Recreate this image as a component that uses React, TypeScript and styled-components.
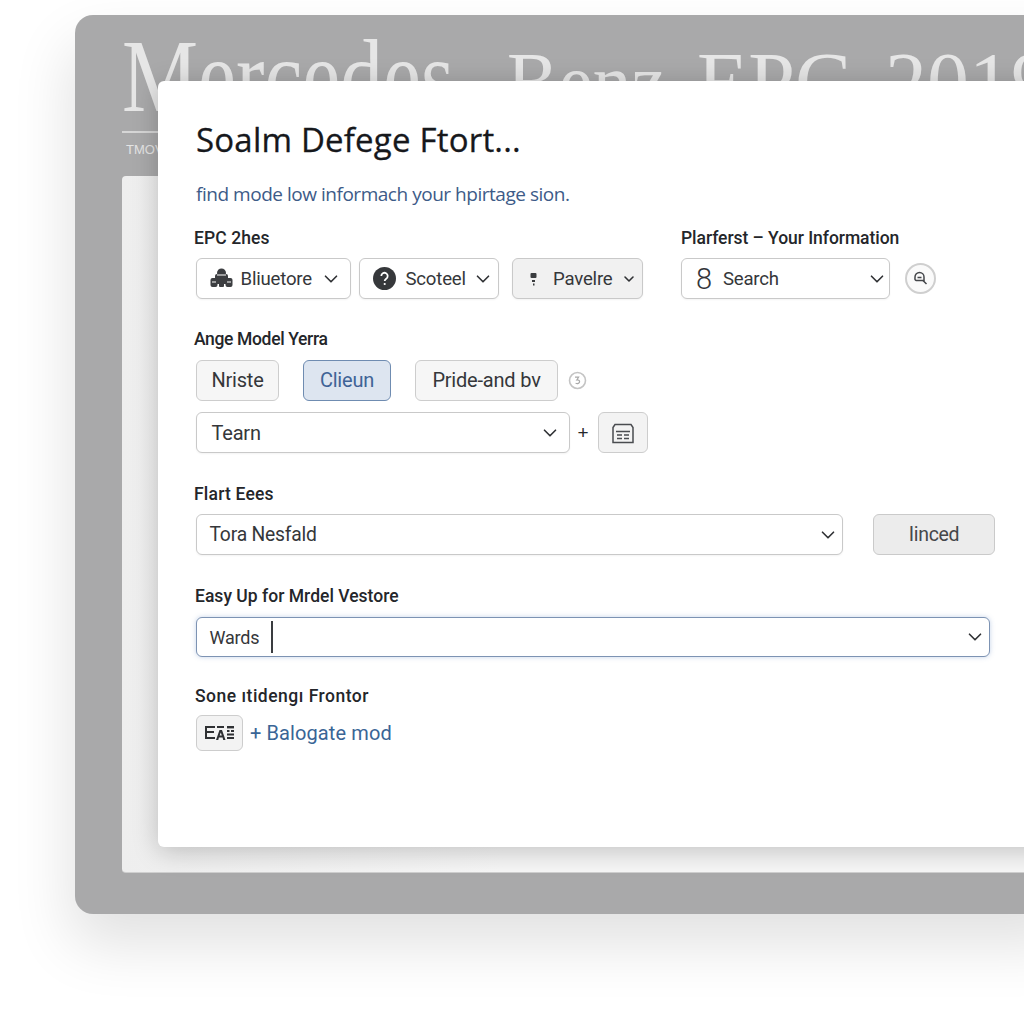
import React from "react";
import styled, { createGlobalStyle } from "styled-components";
import { ChevronDown } from "lucide-react";

const GlobalStyle = createGlobalStyle`
  html, body {
    margin: 0;
    padding: 0;
    width: 1024px;
    height: 1024px;
    overflow: hidden;
    background: #ffffff;
  }
  * {
    box-sizing: border-box;
  }
`;

const Stage = styled.div`
  width: 1024px;
  height: 1024px;
  padding: 15px 0 0 75px;
  overflow: hidden;
  position: relative;
  background: #ffffff;
`;

const BackWindow = styled.div`
  width: 1000px;
  height: 899px;
  padding: 16px 0 0 47px;
  background: #a9a9aa;
  border-radius: 18px 0 0 18px;
  box-shadow: -4px 30px 60px rgba(0, 0, 0, 0.12);
  overflow: hidden;
`;

const BackTitle = styled.div`
  display: flex;
  align-items: baseline;
  height: 90px;
  font-family: "Liberation Serif", serif;
  color: #e6e6e6;
  white-space: nowrap;
`;

const BackWord = styled.span<{ $width: number; $size: number; $squeeze: number }>`
  display: block;
  flex: none;
  width: ${(p) => p.$width}px;
  font-size: ${(p) => p.$size}px;
  line-height: 90px;
  transform: scaleX(${(p) => p.$squeeze});
  transform-origin: left center;
`;

const BackRule = styled.div`
  height: 2px;
  margin-top: 10px;
  background: #d6d6d6;
`;

const BackCaption = styled.div`
  font-family: "Liberation Sans", sans-serif;
  font-size: 13px;
  line-height: 16px;
  margin-top: 9px;
  padding-left: 4px;
  color: #e4e4e4;
`;

const BackPanel = styled.div`
  height: 697px;
  margin-top: 18px;
  background: linear-gradient(90deg, #eeeeee 0%, #f6f6f6 40%);
  border-bottom: 1px solid #cfcfcf;
  border-radius: 4px 0 0 4px;
`;

const Modal = styled.div`
  position: absolute;
  left: 158px;
  top: 81px;
  width: 900px;
  height: 766px;
  padding: 37px 0 0 38px;
  background: #ffffff;
  border-radius: 6px;
  box-shadow: 0 4px 26px rgba(0, 0, 0, 0.22);
  font-family: Roboto, sans-serif;
  color: #2b2d30;
`;

const Title = styled.h1`
  margin: 0;
  font-family: "Open Sans", sans-serif;
  font-size: 33px;
  line-height: 44px;
  font-weight: 500;
  color: #16181c;
  letter-spacing: 0.2px;
  -webkit-text-stroke: 0.3px #16181c;
`;

const Subtitle = styled.p`
  margin: 19px 0 0;
  font-family: "Open Sans", sans-serif;
  font-size: 19px;
  line-height: 26px;
  letter-spacing: -0.47px;
  color: #3d5b88;
`;

const TopColumns = styled.div`
  display: flex;
  margin-top: 19px;
`;

const LeftColumn = styled.div`
  width: 485px;
  flex: none;
`;

const Label = styled.div<{ $gap?: number; $spacing?: number; $left?: number }>`
  margin-left: ${(p) => p.$left ?? -2}px;
  margin-top: ${(p) => p.$gap ?? 0}px;
  font-size: 17.5px;
  line-height: 24px;
  font-weight: 500;
  letter-spacing: ${(p) => p.$spacing ?? -0.35}px;
  color: #24262a;
  white-space: nowrap;
`;

const Row = styled.div<{ $top?: number; $gap?: number }>`
  display: flex;
  align-items: center;
  margin-top: ${(p) => p.$top ?? 8}px;
  gap: ${(p) => p.$gap ?? 8}px;
`;

const SelectBox = styled.div<{
  $width: number;
  $muted?: boolean;
  $focus?: boolean;
  $pad?: number;
  $right?: number;
  $size?: number;
  $lead?: number;
}>`
  width: ${(p) => p.$width}px;
  height: ${(p) => (p.$focus ? 40 : 41)}px;
  margin-left: ${(p) => p.$lead ?? 0}px;
  flex: none;
  display: flex;
  align-items: center;
  padding: 0 ${(p) => p.$right ?? 8.5}px 0 ${(p) => p.$pad ?? 12.5}px;
  background: ${(p) => (p.$muted ? "#f1f1f1" : "#ffffff")};
  border: ${(p) => (p.$focus ? "1.5px solid #7d93b3" : "1.5px solid #c9c9c9")};
  border-radius: 6px;
  box-shadow: ${(p) => (p.$focus ? "0 0 5px rgba(90, 130, 190, 0.35)" : "0 1px 2px rgba(0, 0, 0, 0.05)")};
  font-size: ${(p) => p.$size ?? 18.6}px;
  color: #35373a;
  letter-spacing: -0.2px;
  white-space: nowrap;
`;

const SelectText = styled.span<{ $left?: number }>`
  margin-left: ${(p) => p.$left ?? 0}px;
  flex: 1;
`;

const Arrow = styled(ChevronDown)`
  flex: none;
  color: #2f3134;
`;

const Chip = styled.div<{ $width: number; $active?: boolean }>`
  width: ${(p) => p.$width}px;
  height: 41px;
  padding-bottom: 2px;
  flex: none;
  display: flex;
  align-items: center;
  justify-content: center;
  background: ${(p) => (p.$active ? "#dde5f0" : "#f6f6f6")};
  border: 1.5px solid ${(p) => (p.$active ? "#6f8cb1" : "#cdcdcd")};
  border-radius: 6px;
  font-size: 20px;
  letter-spacing: -0.2px;
  color: ${(p) => (p.$active ? "#3f6396" : "#35373a")};
  white-space: nowrap;
`;

const IconButton = styled.div<{ $width: number; $height: number }>`
  width: ${(p) => p.$width}px;
  height: ${(p) => p.$height}px;
  flex: none;
  display: flex;
  align-items: center;
  justify-content: center;
  background: #f3f3f3;
  border: 1.5px solid #cdcdcd;
  border-radius: 6px;
`;

const RoundIcon = styled.div`
  width: 31px;
  height: 31px;
  margin-left: 7px;
  flex: none;
  display: flex;
  align-items: center;
  justify-content: center;
  background: #fafafa;
  border: 2.5px solid #cfcfcf;
  border-radius: 50%;
`;

const Hint = styled.svg`
  margin-left: -14px;
  flex: none;
`;

const Plus = styled.span`
  width: 28px;
  flex: none;
  padding-right: 2px;
  text-align: center;
  font-family: "Liberation Sans", sans-serif;
  font-size: 19px;
  color: #26282b;
`;

const BigDigit = styled.span`
  font-size: 29px;
  font-weight: 300;
  color: #33353a;
`;

const ApplyButton = styled.div`
  width: 122px;
  height: 41px;
  flex: none;
  margin-left: 30px;
  display: flex;
  align-items: center;
  justify-content: center;
  background: #ececec;
  border: 1.5px solid #cacaca;
  border-radius: 6px;
  font-size: 19.5px;
  letter-spacing: -0.3px;
  color: #45474a;
`;

const Caret = styled.span`
  width: 2px;
  height: 32px;
  margin-left: 12px;
  background: #3a3c40;
`;

const AddLink = styled.span`
  font-size: 20px;
  color: #3a6596;
  letter-spacing: 0.1px;
  white-space: nowrap;
`;

const App = () => (
  <Stage>
    <GlobalStyle />
    <BackWindow>
      <BackTitle>
        <BackWord $width={385} $size={103} $squeeze={0.83}>
          Mercedes
        </BackWord>
        <BackWord $width={190} $size={84} $squeeze={0.92}>
          Benz
        </BackWord>
        <BackWord $width={188} $size={84} $squeeze={1}>
          EPC
        </BackWord>
        <BackWord $width={180} $size={84} $squeeze={1}>
          2019
        </BackWord>
      </BackTitle>
      <BackRule />
      <BackCaption>TMOV</BackCaption>
      <BackPanel />
    </BackWindow>
    <Modal>
      <Title>Soalm Defege Ftort...</Title>
      <Subtitle>find mode low informach your hpirtage sion.</Subtitle>

      <TopColumns>
        <LeftColumn>
          <Label $spacing={0.1}>EPC 2hes</Label>
          <Row>
            <SelectBox $width={155}>
              <svg width="23" height="21" viewBox="0 0 23 21" fill="#3c3e41">
                <circle cx="11.5" cy="5" r="4.5" />
                <rect x="5" y="6" width="13" height="10" rx="2" />
                <rect x="0.5" y="10" width="7" height="9" rx="2" />
                <rect x="15.5" y="10" width="7" height="9" rx="2" />
                <rect x="9" y="12" width="5" height="7" rx="1" />
                <path d="M2 14h4M17 14h4M7 7h9" stroke="#ffffff" strokeWidth="1" />
              </svg>
              <SelectText $left={8}>Bliuetore</SelectText>
              <Arrow size={22} strokeWidth={1.8} />
            </SelectBox>
            <SelectBox $width={140} $right={4.5}>
              <svg width="23" height="23" viewBox="0 0 23 23">
                <circle cx="11.5" cy="11.5" r="11.5" fill="#36383b" />
                <path
                  d="M8.3 9a3.2 3.2 0 1 1 4.9 2.7c-1 .7-1.5 1.2-1.5 2.3"
                  fill="none"
                  stroke="#ffffff"
                  strokeWidth="1.8"
                />
                <circle cx="11.7" cy="17" r="1.1" fill="#ffffff" />
              </svg>
              <SelectText $left={10}>Scoteel</SelectText>
              <Arrow size={22} strokeWidth={1.8} />
            </SelectBox>
            <SelectBox $width={131} $muted $pad={16} $right={5.5} $lead={5}>
              <svg width="10" height="14" viewBox="0 0 10 14" fill="#3a3c3f">
                <rect x="1.5" y="1" width="6" height="5" rx="1" />
                <rect x="3" y="8" width="3" height="2" />
                <rect x="4" y="11.5" width="1.5" height="2" />
              </svg>
              <SelectText $left={14}>Pavelre</SelectText>
              <Arrow size={16} strokeWidth={2.4} />
            </SelectBox>
          </Row>
        </LeftColumn>
        <div>
          <Label $left={0} $spacing={-0.05}>
            Plarferst – Your Information
          </Label>
          <Row>
            <SelectBox $width={209} $pad={14} $right={1.5}>
              <BigDigit>8</BigDigit>
              <SelectText $left={11}>Search</SelectText>
              <Arrow size={22} strokeWidth={1.8} />
            </SelectBox>
            <RoundIcon>
              <svg width="15" height="15" viewBox="0 0 15 15" fill="none" stroke="#44464a" strokeWidth="1.5">
                <path d="M6.5 1.5a4.5 4.5 0 0 1 4.5 4.5v3.5H3.2A1.8 1.8 0 0 1 2 7.2V6a4.5 4.5 0 0 1 4.5-4.5z" />
                <path d="M4.5 6.6h4M10 9.500l3.500 3.500" />
              </svg>
            </RoundIcon>
          </Row>
        </div>
      </TopColumns>

      <Label $gap={28}>Ange Model Yerra</Label>
      <Row $top={9} $gap={24}>
        <Chip $width={83}>Nriste</Chip>
        <Chip $width={88} $active>
          Clieun
        </Chip>
        <Chip $width={143}>Pride-and bv</Chip>
        <Hint width="19" height="19" viewBox="0 0 19 19" fill="none">
          <circle cx="9.5" cy="9.5" r="8" stroke="#c4c4c4" strokeWidth="1.6" />
          <path d="M7 6.2h3.6L8.8 9c1.6-.2 2.8.5 2.8 1.8 0 1.5-2 2.200-4 1.400" stroke="#a9a9a9" strokeWidth="1.2" />
        </Hint>
      </Row>
      <Row $top={11} $gap={0}>
        <SelectBox $width={374} $pad={14.5} $size={20}>
          <SelectText>Tearn</SelectText>
          <Arrow size={22} strokeWidth={1.8} />
        </SelectBox>
        <Plus>+</Plus>
        <IconButton $width={50} $height={41}>
          <svg width="26" height="22" viewBox="0 0 26 22" fill="none" stroke="#4a4c50" strokeWidth="1.5">
            <path d="M3 5.500l2-3h16l2 3v15H3z" />
            <path d="M6 9.500h14M7 13h5M14 13h5M7 16.500h5M14 16.500h5" />
          </svg>
        </IconButton>
      </Row>

      <Label $gap={29} $spacing={0.2}>
        Flart Eees
      </Label>
      <Row $top={8} $gap={0}>
        <SelectBox $width={647} $right={3.5} $size={19.3}>
          <SelectText>Tora Nesfald</SelectText>
          <Arrow size={22} strokeWidth={1.8} />
        </SelectBox>
        <ApplyButton>Iinced</ApplyButton>
      </Row>

      <Label $gap={29} $left={-1} $spacing={0.02}>
        Easy Up for Mrdel Vestore
      </Label>
      <Row $top={9} $gap={0}>
        <SelectBox $width={794} $focus $right={3.5} $size={18}>
          <span>Wards</span>
          <Caret />
          <SelectText />
          <Arrow size={22} strokeWidth={1.8} />
        </SelectBox>
      </Row>

      <Label $gap={27} $left={-1} $spacing={0.5}>
        Sone ıtidengı Frontor
      </Label>
      <Row $top={7} $gap={7}>
        <IconButton $width={47} $height={36}>
          <svg width="31" height="19" viewBox="0 0 31 19" fill="#2f3134">
            <path d="M1 2h10v2H3v3h7v2H3v4h8v2H1z" />
            <rect x="13" y="2" width="7" height="2" />
            <path d="M12 16l3.500-10h2.500l3.500 10h-2.300l-.6-2.500h-3.700l-.6 2.500zM15.700 11.500h2.100l-1-3z" />
            <rect x="23" y="2" width="7" height="2.400" />
            <rect x="23" y="6" width="2.500" height="2" />
            <rect x="27" y="6" width="3" height="2" />
            <rect x="23" y="9.500" width="7" height="2" />
            <rect x="23" y="13" width="7" height="2" />
          </svg>
        </IconButton>
        <AddLink>+ Balogate mod</AddLink>
      </Row>
    </Modal>
  </Stage>
);

export default App;
